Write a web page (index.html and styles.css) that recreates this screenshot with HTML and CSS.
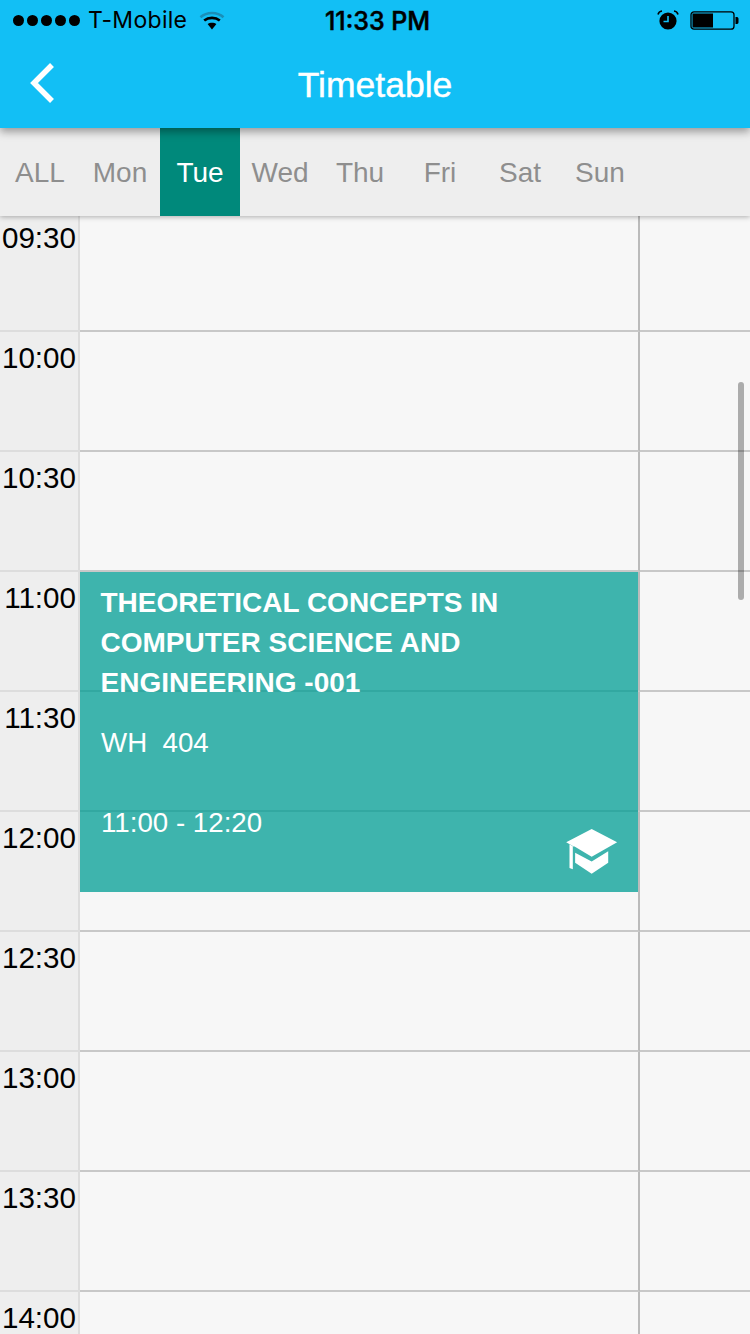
FILE: index.html
```html
<!DOCTYPE html>
<html>
  <head>
    <meta charset="UTF-8" />
    <title>Timetable</title>
    <link rel="stylesheet" href="styles.css">
  </head>

  <body>
    <div class="page">
      <header class="header">
        <div class="status">
          <div class="status-left">
            <div class="signal">
              <span class="dot"></span><span class="dot"></span><span class="dot"></span><span class="dot"></span><span class="dot"></span>
            </div>
            <span class="carrier">T-Mobile</span>
            <svg class="wifi" width="26" height="19" viewBox="0 0 26 19">
              <path d="M1.5 6.2C7.8 .6 18.2 .6 24.5 6.2" fill="none" stroke="#1a8fb8" stroke-width="2.6" />
              <path d="M5.2 9.6C9.6 5.9 16.4 5.9 20.8 9.6" fill="none" stroke="#000" stroke-width="2.6" />
              <path d="M8.6 13C11 11.2 15 11.2 17.4 13L13 18.5Z" fill="#000" />
            </svg>
          </div>
          <div class="clock">11:33 PM</div>
          <div class="status-right">
            <svg class="alarm" width="22" height="20" viewBox="0 0 22 20">
              <circle cx="11" cy="11" r="8.6" fill="#000" />
              <path d="M11 6V11.5H6.5" fill="none" stroke="#12bff5" stroke-width="1.6" />
              <path d="M1 4.5C1.5 2.5 3 1.2 5 1M21 4.5C20.5 2.5 19 1.2 17 1" fill="none" stroke="#000" stroke-width="1.6" />
            </svg>
            <svg class="battery" width="49" height="19" viewBox="0 0 49 19">
              <rect x="1" y=".8" width="43" height="17.4" rx="3" fill="none" stroke="#000" stroke-width="1.3" />
              <rect x="2.5" y="2.5" width="20.5" height="14" fill="#000" />
              <path d="M45.5 6H47C48 6 48.500 7 48.500 8V11C48.500 12 48 13 47 13H45.500Z" fill="#000" />
            </svg>
          </div>
        </div>
        <div class="navbar">
          <svg class="back" width="30" height="42" viewBox="0 0 30 42">
            <polyline points="24,3 6,21 24,39" fill="none" stroke="#fff" stroke-width="5.500" />
          </svg>
          <h1 class="title">Timetable</h1>
        </div>
      </header>

      <nav class="tabs">
        <div class="tab">ALL</div>
        <div class="tab">Mon</div>
        <div class="tab active">Tue</div>
        <div class="tab">Wed</div>
        <div class="tab">Thu</div>
        <div class="tab">Fri</div>
        <div class="tab">Sat</div>
        <div class="tab">Sun</div>
      </nav>

      <div class="grid">
        <div class="row"><div class="time">09:30</div><div class="slot"></div><div class="rest"></div></div>
        <div class="row"><div class="time">10:00</div><div class="slot"></div><div class="rest"></div></div>
        <div class="row"><div class="time">10:30</div><div class="slot"></div><div class="rest"></div></div>
        <div class="row"><div class="time">11:00</div><div class="slot"></div><div class="rest"></div></div>
        <div class="row"><div class="time">11:30</div><div class="slot"></div><div class="rest"></div></div>
        <div class="row"><div class="time">12:00</div><div class="slot"></div><div class="rest"></div></div>
        <div class="row"><div class="time">12:30</div><div class="slot"></div><div class="rest"></div></div>
        <div class="row"><div class="time">13:00</div><div class="slot"></div><div class="rest"></div></div>
        <div class="row"><div class="time">13:30</div><div class="slot"></div><div class="rest"></div></div>
        <div class="row"><div class="time">14:00</div><div class="slot"></div><div class="rest"></div></div>

        <div class="event">
          <div class="event-name">THEORETICAL CONCEPTS IN COMPUTER SCIENCE AND ENGINEERING -001</div>
          <div class="event-room">WH&nbsp; 404</div>
          <div class="event-hours">11:00 - 12:20</div>
          <svg class="cap" width="52" height="45" viewBox="78 88 156 136">
            <path d="M155 88L232 128L155 172L102 140V142L78 128Z" fill="#fff" />
            <path d="M88 134L98 140V210L88 206Z" fill="#fff" />
            <path d="M105 160L155 186L205 155V190L155 223L105 190Z" fill="#fff" />
          </svg>
        </div>

        <div class="scrollbar"></div>
      </div>
    </div>
  </body>
</html>
```

FILE: styles.css
```css
html,
body {
  margin: 0;
  padding: 0;
}

body {
  font-family: "Liberation Sans", Arial, sans-serif;
  background-color: #f7f7f7;
}

.page {
  width: 750px;
  height: 1334px;
  overflow: hidden;
}

.header {
  position: relative;
  z-index: 3;
  height: 128px;
  background-color: #12bff5;
  box-shadow: 0 4px 8px rgba(0, 0, 0, 0.35);
}

.status {
  display: grid;
  grid-template-columns: 1fr auto 1fr;
  align-items: center;
  height: 40px;
  padding: 0 11px 0 13px;
  color: #000;
}

.status-left {
  display: flex;
  align-items: center;
}

.signal {
  display: flex;
  gap: 3px;
}

.dot {
  width: 11px;
  height: 11px;
  border-radius: 50%;
  background-color: #000;
}

.carrier {
  margin-left: 8px;
  font-family: Inter, "Liberation Sans", sans-serif;
  font-size: 23px;
  letter-spacing: 0.3px;
}

.wifi {
  margin-left: 12px;
}

.clock {
  margin-left: 3px;
  padding-top: 1px;
  font-family: Inter, "Liberation Sans", sans-serif;
  font-size: 25px;
  font-weight: 500;
  -webkit-text-stroke: 0.5px #000;
}

.status-right {
  display: flex;
  justify-content: flex-end;
  align-items: center;
  gap: 11px;
}

.navbar {
  display: flex;
  align-items: center;
  justify-content: center;
  position: relative;
  height: 88px;
}

.back {
  position: absolute;
  left: 28px;
  top: 22px;
}

.title {
  margin: 2px 0 0 0;
  color: #fff;
  font-size: 35.5px;
  font-weight: normal;
  -webkit-text-stroke: 0.4px #fff;
}

.tabs {
  position: relative;
  z-index: 2;
  display: flex;
  height: 88px;
  background-color: #eee;
  box-shadow: 0 1px 5px rgba(0, 0, 0, 0.3);
}

.tab {
  width: 80px;
  line-height: 90px;
  text-align: center;
  font-size: 28px;
  color: #8e8e8e;
}

.tab.active {
  background-color: #00897b;
  color: #fff;
}

.grid {
  position: relative;
  margin-top: -4px;
}

.row {
  display: flex;
  height: 120px;
}

.time {
  box-sizing: border-box;
  width: 80px;
  height: 120px;
  padding-top: 6px;
  padding-right: 2px;
  background-color: #eee;
  border-right: 2px solid #ddd;
  border-bottom: 2px solid #ddd;
  font-size: 29.6px;
  line-height: 40px;
  text-align: right;
  color: #000;
}

.slot {
  box-sizing: border-box;
  width: 560px;
  border-right: 2px solid #bbb;
  border-bottom: 2px solid #c8c8c8;
}

.rest {
  box-sizing: border-box;
  width: 110px;
  border-bottom: 2px solid #c8c8c8;
}

.event {
  box-sizing: border-box;
  position: absolute;
  left: 80px;
  top: 360px;
  width: 558px;
  height: 320px;
  padding: 11px 21px;
  background-color: rgba(0, 157, 148, 0.75);
  color: #fff;
  font-size: 27.7px;
  line-height: 40px;
}

.event-name {
  margin-left: -0.5px;
  font-size: 28px;
  font-weight: bold;
}

.event-room {
  margin-top: 20px;
}

.event-hours {
  margin-top: 40px;
}

.cap {
  position: absolute;
  right: 20px;
  bottom: 18px;
}

.scrollbar {
  position: absolute;
  left: 738px;
  top: 170px;
  width: 6px;
  height: 218px;
  border-radius: 3px;
  background-color: rgba(0, 0, 0, 0.3);
}
```
